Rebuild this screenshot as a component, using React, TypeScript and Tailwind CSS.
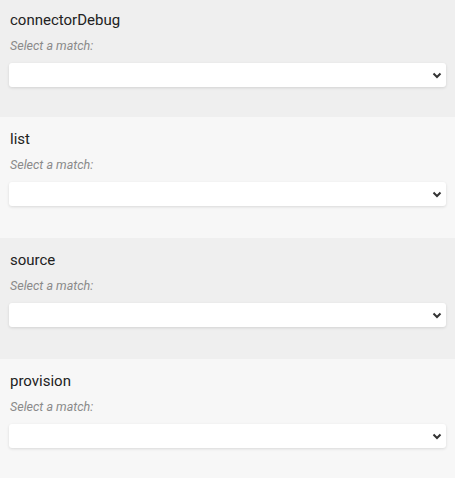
import React from "react";

const items = [
  { name: "connectorDebug", bg: "bg-[#efefef]", h: "h-[117px]", pt: "pt-[11px]" },
  { name: "list", bg: "bg-[#f7f7f7]", h: "h-[121px]", pt: "pt-[13px]" },
  { name: "source", bg: "bg-[#efefef]", h: "h-[121px]", pt: "pt-[13px]" },
  { name: "provision", bg: "bg-[#f7f7f7]", h: "h-[121px]", pt: "pt-[13px]" },
];

function Chevron() {
  return (
    <svg width="10" height="7" viewBox="0 0 10 7" className="text-[#333]">
      <path d="M1.5 1.5 L5 5 L8.5 1.5" fill="none" stroke="currentColor" strokeWidth="2" />
    </svg>
  );
}

export default function App() {
  return (
    <div className="w-[455px] h-[478px] overflow-hidden font-['Roboto',sans-serif]">
      {items.map((it) => (
        <div key={it.name} className={`${it.bg} ${it.h} ${it.pt} px-[9px] flex flex-col`}>
          <div className="text-[15px] leading-[18px] text-[#222] pl-px">{it.name}</div>
          <div className="mt-[9px] text-[12.5px] leading-[16px] italic text-[#8a8a8a] pl-px">Select a match:</div>
          <div className="mt-[9px] h-[24px] bg-white rounded-[3px] shadow-[0_1px_3px_rgba(0,0,0,0.12)] flex items-center justify-end pr-[4px]">
            <Chevron />
          </div>
        </div>
      ))}
    </div>
  );
}
